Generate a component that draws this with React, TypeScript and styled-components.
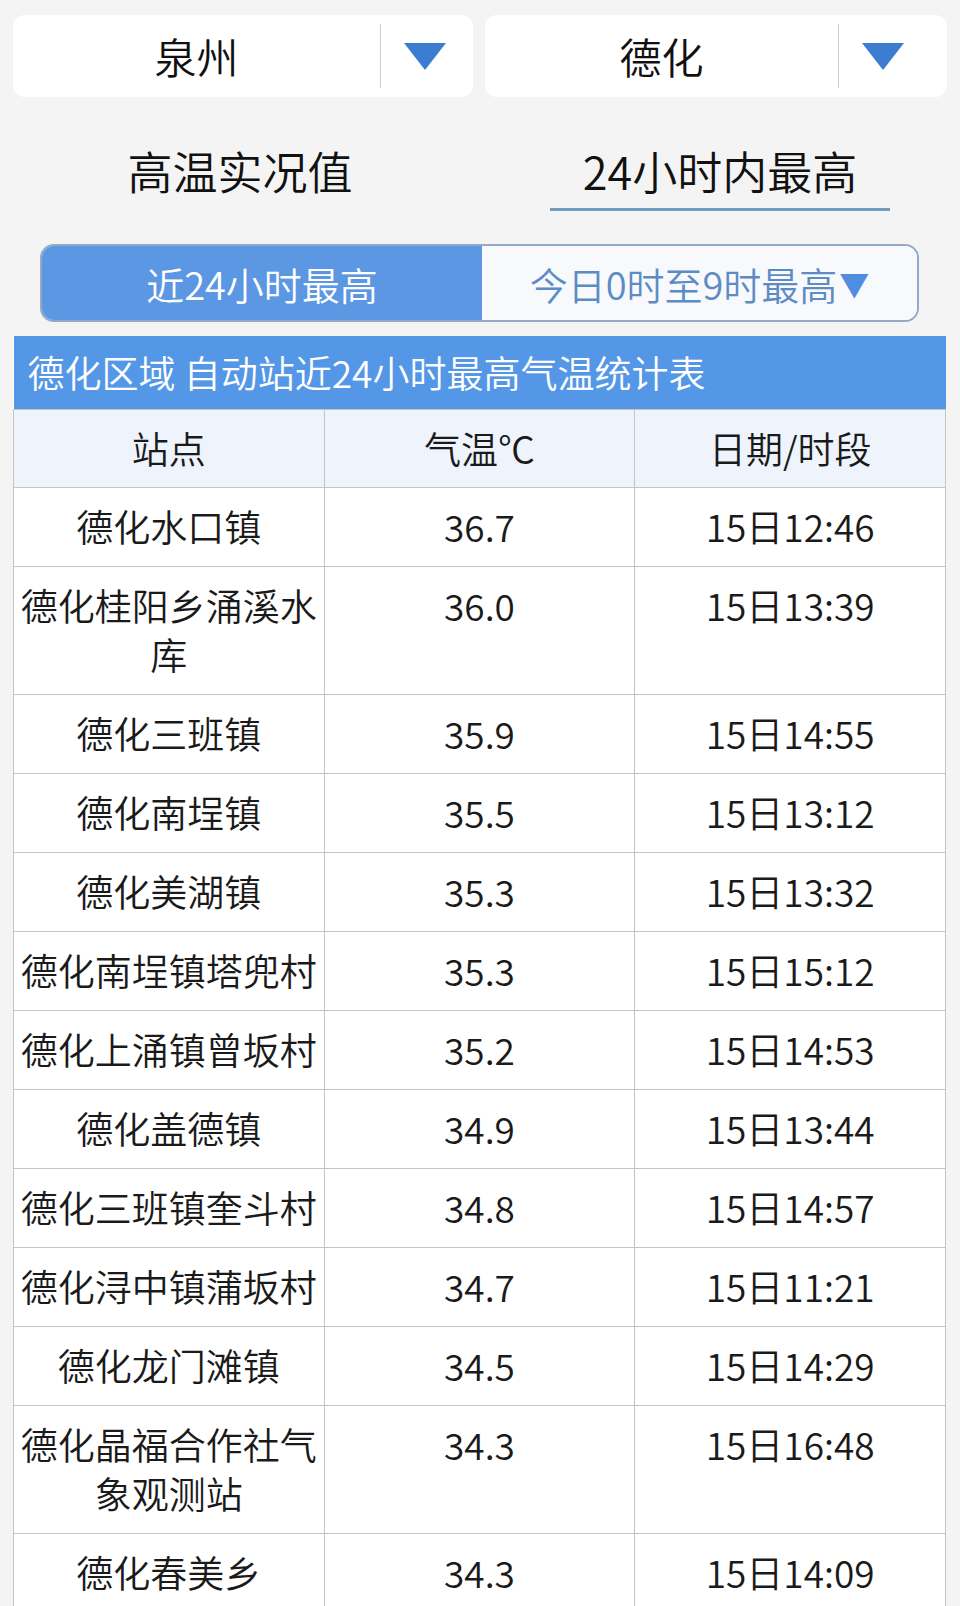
import React from "react";
import styled, { createGlobalStyle } from "styled-components";

const Global = createGlobalStyle`
  html, body {
    margin: 0;
    padding: 0;
    background: #f4f4f4;
    font-family: "Noto Sans CJK SC", "Noto Sans", sans-serif;
    font-weight: 350;
    color: #1a1a1a;
  }
`;

const Page = styled.div`
  width: 960px;
  padding-top: 15px;
  box-sizing: border-box;
`;

const SelectRow = styled.div`
  display: grid;
  grid-template-columns: 460px 462px;
  gap: 12px;
  padding: 0 13px;
`;

const SelectCard = styled.div`
  height: 82px;
  background: #ffffff;
  border-radius: 12px;
  display: flex;
  align-items: center;
`;

const SelectText = styled.div`
  flex: 1;
  text-align: center;
  font-size: 42px;
  line-height: 82px;
  color: #111;
`;

const Divider = styled.div`
  width: 1px;
  align-self: stretch;
  margin: 9px 0;
  background: #cfcfcf;
`;

const ArrowZone = styled.div<{ $w: number }>`
  width: ${(p) => p.$w}px;
  display: flex;
  align-items: center;
  padding-left: 23px;
  box-sizing: border-box;
`;

const Tabs = styled.div`
  display: grid;
  grid-template-columns: 1fr 1fr;
  margin-top: 44px;
`;

const TabCell = styled.div`
  display: flex;
  justify-content: center;
`;

const Tab = styled.div<{ $active?: boolean }>`
  font-size: 45px;
  line-height: 60px;
  padding: 0 33px 7px;
  color: #111;
  border-bottom: 3px solid ${(p) => (p.$active ? "#6c9ec4" : "transparent")};
`;

const Segment = styled.div`
  display: grid;
  grid-template-columns: 440px 1fr;
  margin: 33px 41px 0 40px;
  height: 78px;
  border: 2px solid #93aac6;
  border-radius: 14px;
  overflow: hidden;
  box-sizing: border-box;
`;

const SegItem = styled.div<{ $active?: boolean }>`
  display: flex;
  align-items: center;
  justify-content: center;
  font-size: 38px;
  background: ${(p) => (p.$active ? "#5b97e2" : "#f7f9fc")};
  color: ${(p) => (p.$active ? "#ffffff" : "#5d8cc4")};
`;

const Caret = styled.span`
  color: #4f8de0;
  font-size: 30px;
  margin-left: 2px;
`;

const Table = styled.table`
  margin: 14px 0 0 13px;
  width: 933px;
  table-layout: fixed;
  border-collapse: collapse;
  background: #ffffff;
`;

const TitleCell = styled.th`
  background: #5597e7;
  color: #ffffff;
  font-size: 37px;
  font-weight: 350;
  text-align: left;
  height: 73px;
  padding: 0 0 0 14px;
  white-space: nowrap;
  box-sizing: border-box;
`;

const HeadCell = styled.th`
  background: #eef3fc;
  font-size: 37px;
  font-weight: 350;
  line-height: 49px;
  padding: 14px 4px 14px;
  border: 1px solid #c4c4c4;
  text-align: center;
  color: #1a1a1a;
`;

const Cell = styled.td`
  font-size: 37px;
  line-height: 49px;
  padding: 14px 4px 15px;
  border: 1px solid #c4c4c4;
  text-align: center;
  vertical-align: top;
  color: #1a1a1a;
`;

const Triangle = () => (
  <svg width="42" height="27" viewBox="0 0 42 27">
    <polygon points="0,0 42,0 21,27" fill="#3b7dd0" />
  </svg>
);

const rows: [string, string, string][] = [
  ["德化水口镇", "36.7", "15日12:46"],
  ["德化桂阳乡涌溪水库", "36.0", "15日13:39"],
  ["德化三班镇", "35.9", "15日14:55"],
  ["德化南埕镇", "35.5", "15日13:12"],
  ["德化美湖镇", "35.3", "15日13:32"],
  ["德化南埕镇塔兜村", "35.3", "15日15:12"],
  ["德化上涌镇曾坂村", "35.2", "15日14:53"],
  ["德化盖德镇", "34.9", "15日13:44"],
  ["德化三班镇奎斗村", "34.8", "15日14:57"],
  ["德化浔中镇蒲坂村", "34.7", "15日11:21"],
  ["德化龙门滩镇", "34.5", "15日14:29"],
  ["德化晶福合作社气象观测站", "34.3", "15日16:48"],
  ["德化春美乡", "34.3", "15日14:09"],
];

export default function App() {
  return (
    <Page>
      <Global />
      <SelectRow>
        <SelectCard>
          <SelectText>泉州</SelectText>
          <Divider />
          <ArrowZone $w={92}>
            <Triangle />
          </ArrowZone>
        </SelectCard>
        <SelectCard>
          <SelectText>德化</SelectText>
          <Divider />
          <ArrowZone $w={108}>
            <Triangle />
          </ArrowZone>
        </SelectCard>
      </SelectRow>

      <Tabs>
        <TabCell>
          <Tab>高温实况值</Tab>
        </TabCell>
        <TabCell>
          <Tab $active>24小时内最高</Tab>
        </TabCell>
      </Tabs>

      <Segment>
        <SegItem $active>近24小时最高</SegItem>
        <SegItem>
          今日0时至9时最高<Caret>▼</Caret>
        </SegItem>
      </Segment>

      <Table>
        <thead>
          <tr>
            <TitleCell colSpan={3}>德化区域 自动站近24小时最高气温统计表</TitleCell>
          </tr>
          <tr>
            <HeadCell>站点</HeadCell>
            <HeadCell>气温℃</HeadCell>
            <HeadCell>日期/时段</HeadCell>
          </tr>
        </thead>
        <tbody>
          {rows.map((r, i) => (
            <tr key={i}>
              <Cell>{r[0]}</Cell>
              <Cell>{r[1]}</Cell>
              <Cell>{r[2]}</Cell>
            </tr>
          ))}
        </tbody>
      </Table>
    </Page>
  );
}
